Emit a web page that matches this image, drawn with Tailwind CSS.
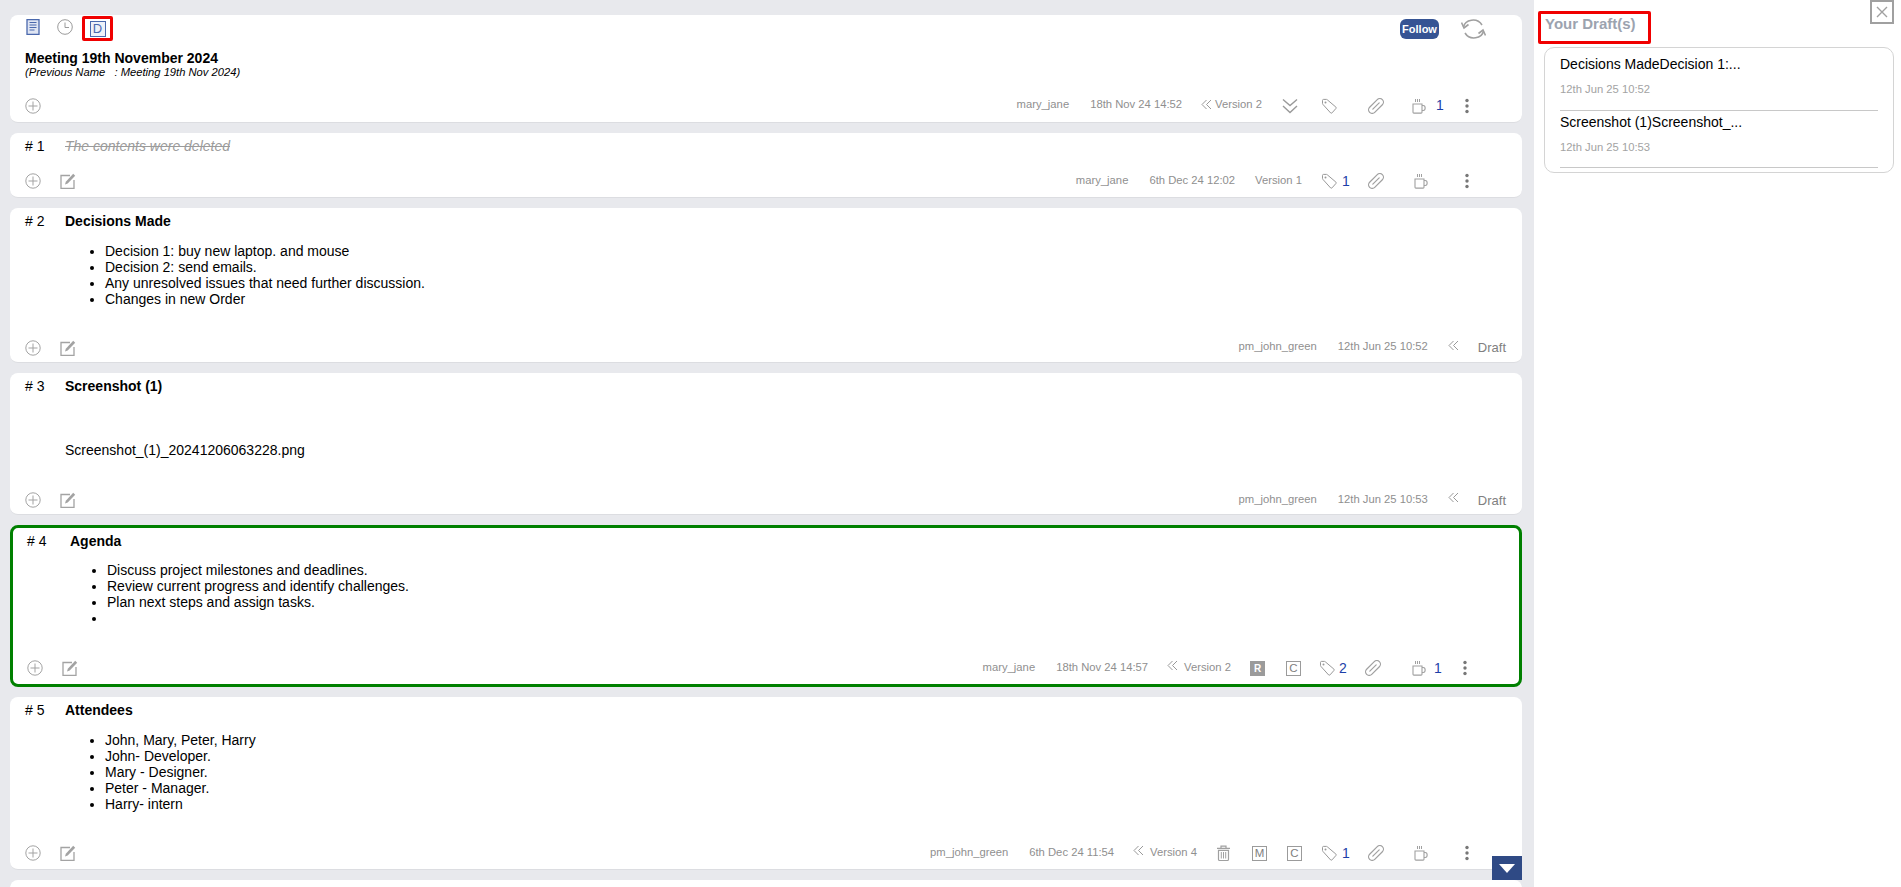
<!DOCTYPE html>
<html lang="en">
<head>
    <meta charset="UTF-8">
    <title>Meeting 19th November 2024</title>
    <script src="https://cdn.jsdelivr.net/npm/@tailwindcss/browser@4"></script>
</head>
<body class="font-['Liberation_Sans',Arial,sans-serif] text-[14px] text-black">

<!-- icon sprite -->
<svg class="hidden">
    <symbol id="i-add" viewBox="0 0 16 16"><circle cx="8" cy="8" r="7.200" fill="none" stroke="#a3a3a3" stroke-width="1"/><path d="M8 3.500v9M3.500 8h9" stroke="#a3a3a3" stroke-width="1" fill="none"/></symbol>
    <symbol id="i-edit" viewBox="0 0 16 16"><path d="M10 2.500H1v13h13V7" fill="none" stroke="#a3a3a3" stroke-width="1.300"/><path d="M5 11.500l.8-2.800L13.200.8l2 2-7.500 7.800z" fill="#a3a3a3"/></symbol>
    <symbol id="i-tag" viewBox="0 0 16 16"><path d="M1.500 5.300V2.400c0-.6.4-1 1-1h2.800c.4 0 .7.1 1 .4l8.600 7.300c.4.4.4.9.1 1.300l-4 4.500c-.4.4-.9.4-1.300.1L2 6.500c-.3-.4-.5-.8-.5-1.200z" fill="none" stroke="#999" stroke-width="1"/><circle cx="4.500" cy="4.500" r="1" fill="#999"/></symbol>
    <symbol id="i-link" viewBox="0 0 16 16"><g transform="rotate(-45 8 8)"><rect x="-1" y="4.400" width="18" height="7.200" rx="3.600" fill="none" stroke="#a0a0a0" stroke-width="1.200"/><path d="M3.500 8h9" stroke="#a0a0a0" stroke-width="1.200" stroke-linecap="round"/></g></symbol>
    <symbol id="i-cup" viewBox="0 0 16 16"><path d="M2 6h9v8.200c0 .6-.4.9-.9.9H2.900c-.5 0-.9-.3-.9-.9z" fill="none" stroke="#a0a0a0" stroke-width="1.100"/><path d="M11 7.500h1.200c2.600 0 2.600 5 0 5H11" fill="none" stroke="#a0a0a0" stroke-width="1.100"/><path d="M4.500 1v3M6.500 1v3M8.500 1v3" stroke="#a0a0a0" stroke-width="1"/></symbol>
    <symbol id="i-dots" viewBox="0 0 4 16"><circle cx="2" cy="2.500" r="1.700" fill="#777"/><circle cx="2" cy="8" r="1.700" fill="#777"/><circle cx="2" cy="13.500" r="1.700" fill="#777"/></symbol>
    <symbol id="i-back" viewBox="0 0 11 11"><path d="M5.500 1L1 5.500 5.500 10M10 1L5.500 5.500 10 10" fill="none" stroke="#999" stroke-width="1"/></symbol>
    <symbol id="i-down" viewBox="0 0 16 16"><path d="M1 1.500l7 6 7-6M1 8l7 6.500L15 8" fill="none" stroke="#999" stroke-width="1.400"/></symbol>
    <symbol id="i-trash" viewBox="0 0 15 16"><path d="M1 3.300h13M5 3.300V1.200h5v2.100M2.500 5.300h10v9c0 .7-.4 1.200-1 1.200h-8c-.6 0-1-.5-1-1.200z" fill="none" stroke="#a0a0a0" stroke-width="1.200"/><path d="M5.300 7v6.500M7.500 7v6.500M9.700 7v6.500" stroke="#a0a0a0" stroke-width="1"/></symbol>
</svg>

<div class="flex h-[887px] overflow-hidden bg-[#e8e9ed]">

    <!-- NOTES -->
    <div class="relative w-[1534px] shrink-0 overflow-hidden pt-[15px] pl-[10px] pr-[12px] flex flex-col gap-[10px]">

        <!-- document header -->
        <div class="h-[108px] shrink-0 rounded-[8px] bg-white border-b border-[#dcdde1] flex flex-col px-[15px]">
            <div class="flex items-center h-[25px] relative">
                <svg class="w-[14px] h-[16px] ml-px mt-[-1px]" viewBox="0 0 14 16"><path d="M1 .7h12v14.600H1z" fill="#dfe5f3" stroke="#4a68ad" stroke-width="1.300"/><path d="M3.500 3.500h7M3.500 6h7M3.500 8.500h7M3.500 11h5" stroke="#4a68ad" stroke-width="1.100"/></svg>
                <svg class="w-[16px] h-[16px] ml-[17px] mt-[-1px]" viewBox="0 0 16 16"><circle cx="8" cy="8" r="7.300" fill="none" stroke="#9a9a9a" stroke-width="1"/><path d="M8 3.500V8.500H12" fill="none" stroke="#9a9a9a" stroke-width="1"/></svg>
                <div class="ml-[9px] mt-[2px] w-[31px] h-[25px] border-[3px] border-[#f00000] rounded-[2px] flex items-center justify-center">
                    <span class="w-[16px] h-[16px] border-[1.500px] border-[#4a68ad] bg-[#eef1f9] text-[#4a68ad] text-[13px] leading-[13px] text-center">D</span>
                </div>
                <span class="ml-auto mr-[22px] w-[39px] h-[20px] rounded-[6px] bg-[#365494] text-white text-[11px] font-bold leading-[20px] text-center mt-[2px]">Follow</span>
                <svg class="w-[25px] h-[22px] mr-[21px] mt-[2px]" viewBox="0 0 25 22"><path d="M2.500 9C4 1.500 16 -1 21 7M22.500 13C21 20.500 9 23 4 15" fill="none" stroke="#a0a0a0" stroke-width="1.600"/><path d="M.5 4.500L3 10l4.500-3.500M24.500 17.500L22 12l-4.500 3.500" fill="none" stroke="#a0a0a0" stroke-width="1.600"/></svg>
            </div>
            <div class="font-bold leading-[16px] mt-[10px]">Meeting 19th November 2024</div>
            <div class="italic text-[11.200px] leading-[13px] whitespace-pre">(Previous Name   : Meeting 19th Nov 2024)</div>
            <div class="mt-auto h-[33px] flex items-center text-[11.250px] text-[#8f8f8f]">
                <svg class="w-[16px] h-[16px]"><use href="#i-add"/></svg>
                <span class="ml-auto -mt-[2px]">mary_jane</span>
                <span class="ml-[21px] -mt-[2px]">18th Nov 24 14:52</span>
                <svg class="ml-[19px] w-[11px] h-[11px] -mt-[3px]"><use href="#i-back"/></svg>
                <span class="ml-[3px] -mt-[2px]">Version 2</span>
                <svg class="ml-[20px] w-[16px] h-[16px]"><use href="#i-down"/></svg>
                <svg class="ml-[23px] w-[16px] h-[16px]"><use href="#i-tag"/></svg>
                <svg class="ml-[31px] w-[16px] h-[16px]"><use href="#i-link"/></svg>
                <svg class="ml-[27px] w-[16px] h-[16px]"><use href="#i-cup"/></svg>
                <span class="ml-[9px] w-[8px] text-[14px] text-[#1d3fa8]">1</span>
                <svg class="ml-[21px] w-[4px] h-[16px]"><use href="#i-dots"/></svg>
                <span class="w-[38px]"></span>
            </div>
        </div>

        <!-- # 1 -->
        <div class="h-[65px] shrink-0 rounded-[8px] bg-white border-b border-[#dcdde1] flex flex-col px-[15px]">
            <div class="flex h-[26px] items-center">
                <span class="w-[40px]"># 1</span>
                <span class="italic line-through text-[#9b9b9b]">The contents were deleted</span>
            </div>
            <div class="mt-auto h-[32px] flex items-center text-[11.250px] text-[#8f8f8f]">
                <svg class="w-[16px] h-[16px]"><use href="#i-add"/></svg>
                <svg class="ml-[19px] w-[16px] h-[16px]"><use href="#i-edit"/></svg>
                <span class="ml-auto -mt-[2px]">mary_jane</span>
                <span class="ml-[21px] -mt-[2px]">6th Dec 24 12:02</span>
                <span class="ml-[20px] -mt-[2px]">Version 1</span>
                <svg class="ml-[19px] w-[16px] h-[16px]"><use href="#i-tag"/></svg>
                <span class="ml-[5px] w-[8px] text-[14px] text-[#1d3fa8]">1</span>
                <svg class="ml-[18px] w-[16px] h-[16px]"><use href="#i-link"/></svg>
                <svg class="ml-[29px] w-[16px] h-[16px]"><use href="#i-cup"/></svg>
                <svg class="ml-[36px] w-[4px] h-[16px]"><use href="#i-dots"/></svg>
                <span class="w-[38px]"></span>
            </div>
        </div>

        <!-- # 2 -->
        <div class="h-[155px] shrink-0 rounded-[8px] bg-white border-b border-[#dcdde1] flex flex-col px-[15px]">
            <div class="flex h-[26px] items-center">
                <span class="w-[40px]"># 2</span>
                <span class="font-bold">Decisions Made</span>
            </div>
            <ul class="list-disc pl-[80px] mt-[9px] leading-[16px]">
                <li>Decision 1: buy new laptop. and mouse</li>
                <li>Decision 2: send emails.</li>
                <li>Any unresolved issues that need further discussion.</li>
                <li>Changes in new Order</li>
            </ul>
            <div class="mt-auto h-[29px] flex items-center text-[11.250px] text-[#8f8f8f]">
                <svg class="w-[16px] h-[16px]"><use href="#i-add"/></svg>
                <svg class="ml-[19px] w-[16px] h-[16px]"><use href="#i-edit"/></svg>
                <span class="ml-auto -mt-[2px]">pm_john_green</span>
                <span class="ml-[21px] -mt-[2px]">12th Jun 25 10:52</span>
                <svg class="ml-[20px] w-[11px] h-[11px] -mt-[5px]"><use href="#i-back"/></svg>
                <span class="ml-[19px] mr-px mt-px text-[13px] text-[#808080]">Draft</span>
            </div>
        </div>

        <!-- # 3 -->
        <div class="h-[142px] shrink-0 rounded-[8px] bg-white border-b border-[#dcdde1] flex flex-col px-[15px]">
            <div class="flex h-[26px] items-center">
                <span class="w-[40px]"># 3</span>
                <span class="font-bold">Screenshot (1)</span>
            </div>
            <div class="pl-[40px] mt-[43px] leading-[16px]">Screenshot_(1)_20241206063228.png</div>
            <div class="mt-auto h-[28px] flex items-center text-[11.250px] text-[#8f8f8f]">
                <svg class="w-[16px] h-[16px]"><use href="#i-add"/></svg>
                <svg class="ml-[19px] w-[16px] h-[16px]"><use href="#i-edit"/></svg>
                <span class="ml-auto -mt-[2px]">pm_john_green</span>
                <span class="ml-[21px] -mt-[2px]">12th Jun 25 10:53</span>
                <svg class="ml-[20px] w-[11px] h-[11px] -mt-[5px]"><use href="#i-back"/></svg>
                <span class="ml-[19px] mr-px mt-px text-[13px] text-[#808080]">Draft</span>
            </div>
        </div>

        <!-- # 4 selected -->
        <div class="h-[162px] shrink-0 rounded-[8px] bg-white border-[3px] border-[#008000] flex flex-col px-[14px]">
            <div class="flex h-[26px] items-center">
                <span class="w-[43px]"># 4</span>
                <span class="font-bold">Agenda</span>
            </div>
            <ul class="list-disc pl-[80px] mt-[8px] leading-[16px]">
                <li>Discuss project milestones and deadlines.</li>
                <li>Review current progress and identify challenges.</li>
                <li>Plan next steps and assign tasks.</li>
                <li class="h-[16px]"></li>
            </ul>
            <div class="mt-auto h-[32px] flex items-center text-[11.250px] text-[#8f8f8f]">
                <svg class="w-[16px] h-[16px]"><use href="#i-add"/></svg>
                <svg class="ml-[19px] w-[16px] h-[16px]"><use href="#i-edit"/></svg>
                <span class="ml-auto -mt-[2px]">mary_jane</span>
                <span class="ml-[21px] -mt-[2px]">18th Nov 24 14:57</span>
                <svg class="ml-[19px] w-[11px] h-[11px] -mt-[5px]"><use href="#i-back"/></svg>
                <span class="ml-[6px] -mt-[2px]">Version 2</span>
                <span class="ml-[19px] w-[15px] h-[15px] bg-[#9b9b9b] text-white text-[10px] font-bold leading-[15px] text-center">R</span>
                <span class="ml-[21px] w-[15px] h-[15px] border border-[#9b9b9b] text-[#808080] text-[11.500px] leading-[13px] text-center">C</span>
                <svg class="ml-[18px] w-[16px] h-[16px]"><use href="#i-tag"/></svg>
                <span class="ml-[4px] w-[8px] text-[14px] text-[#1d3fa8]">2</span>
                <svg class="ml-[18px] w-[16px] h-[16px]"><use href="#i-link"/></svg>
                <svg class="ml-[30px] w-[16px] h-[16px]"><use href="#i-cup"/></svg>
                <span class="ml-[7px] w-[8px] text-[14px] text-[#1d3fa8]">1</span>
                <svg class="ml-[21px] w-[4px] h-[16px]"><use href="#i-dots"/></svg>
                <span class="w-[38px]"></span>
            </div>
        </div>

        <!-- # 5 -->
        <div class="h-[173px] shrink-0 rounded-[8px] bg-white border-b border-[#dcdde1] flex flex-col px-[15px]">
            <div class="flex h-[26px] items-center">
                <span class="w-[40px]"># 5</span>
                <span class="font-bold">Attendees</span>
            </div>
            <ul class="list-disc pl-[80px] mt-[9px] leading-[16px]">
                <li>John, Mary, Peter, Harry</li>
                <li>John- Developer.</li>
                <li>Mary - Designer.</li>
                <li>Peter - Manager.</li>
                <li>Harry- intern</li>
            </ul>
            <div class="mt-auto h-[32px] flex items-center text-[11.250px] text-[#8f8f8f]">
                <svg class="w-[16px] h-[16px]"><use href="#i-add"/></svg>
                <svg class="ml-[19px] w-[16px] h-[16px]"><use href="#i-edit"/></svg>
                <span class="ml-auto -mt-[2px]">pm_john_green</span>
                <span class="ml-[21px] -mt-[2px]">6th Dec 24 11:54</span>
                <svg class="ml-[19px] w-[11px] h-[11px] -mt-[5px]"><use href="#i-back"/></svg>
                <span class="ml-[6px] -mt-[2px]">Version 4</span>
                <svg class="ml-[19px] w-[15px] h-[16px]"><use href="#i-trash"/></svg>
                <span class="ml-[21px] w-[15px] h-[15px] border border-[#9b9b9b] text-[#808080] text-[11.500px] leading-[13px] text-center">M</span>
                <span class="ml-[20px] w-[15px] h-[15px] border border-[#9b9b9b] text-[#808080] text-[11.500px] leading-[13px] text-center">C</span>
                <svg class="ml-[19px] w-[16px] h-[16px]"><use href="#i-tag"/></svg>
                <span class="ml-[5px] w-[8px] text-[14px] text-[#1d3fa8]">1</span>
                <svg class="ml-[18px] w-[16px] h-[16px]"><use href="#i-link"/></svg>
                <svg class="ml-[29px] w-[16px] h-[16px]"><use href="#i-cup"/></svg>
                <svg class="ml-[36px] w-[4px] h-[16px]"><use href="#i-dots"/></svg>
                <span class="w-[38px]"></span>
            </div>
        </div>

        <!-- next note, cut off by the window -->
        <div class="h-[60px] shrink-0 rounded-[8px] bg-white"></div>

        <!-- scroll down button -->
        <div class="absolute left-[1492px] top-[856px] w-[30px] h-[24px] bg-[#2f4a85] flex items-center justify-center">
            <svg class="w-[16px] h-[9px]" viewBox="0 0 16 9"><path d="M0 0h16L8 9z" fill="#fff"/></svg>
        </div>
    </div>

    <!-- DRAFTS -->
    <div class="relative flex-1 bg-white pl-[10px] pr-[7px]">
        <div class="absolute right-[7px] top-0 w-[24px] h-[24px] border-[2px] border-[#a0a0a0] flex items-center justify-center">
            <svg class="w-[14px] h-[14px]" viewBox="0 0 14 14"><path d="M2 2l10 10M12 2L2 12" stroke="#a0a0a0" stroke-width="1.400"/></svg>
        </div>
        <div class="ml-[-6px] mt-[11px] w-[113px] h-[33px] border-[3px] border-[#f00000] rounded-[2px] pl-[4px] text-[15px] font-bold leading-[20px] text-[#9ca3af]">Your Draft(s)</div>
        <div class="mt-[3px] h-[126px] rounded-[10px] border border-[#d4d4d4] px-[15px]">
            <div class="h-[63px] border-b border-[#c8c8c8] pt-[7px]">
                <div class="leading-[18px]">Decisions MadeDecision 1:...</div>
                <div class="mt-[9px] text-[11.250px] leading-[14px] text-[#a3a3a3]">12th Jun 25 10:52</div>
            </div>
            <div class="h-[57px] border-b border-[#c8c8c8] pt-[2px]">
                <div class="leading-[18px]">Screenshot (1)Screenshot_...</div>
                <div class="mt-[9px] text-[11.250px] leading-[14px] text-[#a3a3a3]">12th Jun 25 10:53</div>
            </div>
        </div>
    </div>
</div>

</body>
</html>
